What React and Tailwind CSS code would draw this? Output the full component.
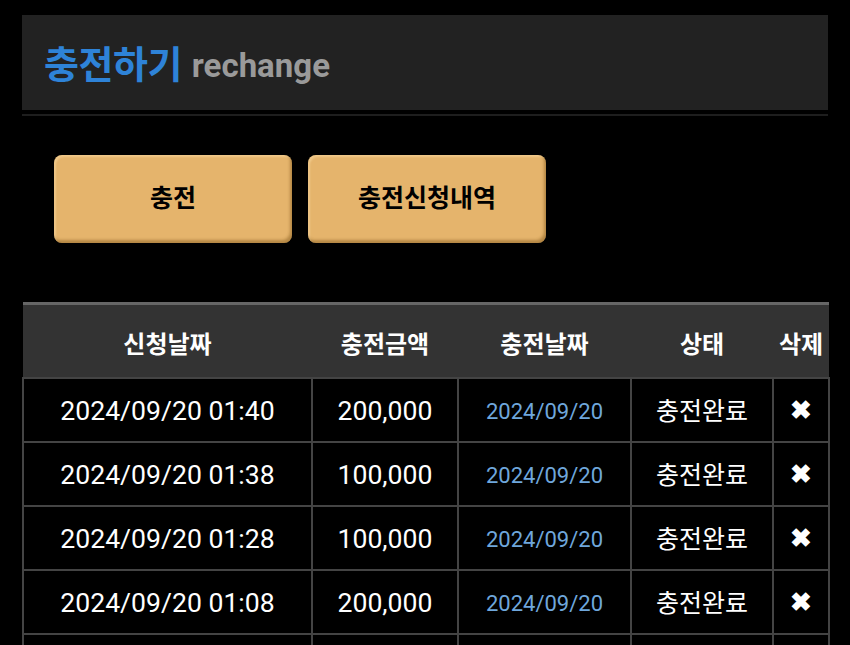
import React from "react";

const rows = [
  { req: "2024/09/20 01:40", amount: "200,000", date: "2024/09/20", status: "충전완료" },
  { req: "2024/09/20 01:38", amount: "100,000", date: "2024/09/20", status: "충전완료" },
  { req: "2024/09/20 01:28", amount: "100,000", date: "2024/09/20", status: "충전완료" },
  { req: "2024/09/20 01:08", amount: "200,000", date: "2024/09/20", status: "충전완료" },
  { req: "2024/09/20 00:52", amount: "100,000", date: "2024/09/20", status: "충전완료" },
];

export default function App() {
  return (
    <div
      className="bg-black px-[22px] pt-[15px] overflow-hidden h-[645px]"
      style={{ fontFamily: 'Roboto, "Noto Sans CJK KR", sans-serif' }}
    >
      {/* header */}
      <div className="h-[95px] bg-[#222222] flex items-center pl-[22px] pt-[6px]">
        <span className="text-[38px] font-bold text-[#2e83d8] tracking-[-0.5px]">충전하기</span>
        <span className="ml-[10px] text-[33px] font-bold text-[#9a9a9a]">rechange</span>
      </div>
      <div className="mt-[4px] h-[2px] bg-[#1e1e1e]" />

      {/* buttons */}
      <div className="flex gap-[16px] pl-[32px] mt-[39px]">
        <button className="w-[238px] h-[88px] rounded-[8px] bg-[#e5b46c] text-black font-bold text-[25px] shadow-[inset_-2px_-3px_3px_rgba(120,80,20,0.45),inset_2px_2px_2px_rgba(255,230,180,0.4)]">
          충전
        </button>
        <button className="w-[238px] h-[88px] rounded-[8px] bg-[#e5b46c] text-black font-bold text-[25px] shadow-[inset_-2px_-3px_3px_rgba(120,80,20,0.45),inset_2px_2px_2px_rgba(255,230,180,0.4)]">
          충전신청내역
        </button>
      </div>

      {/* table */}
      <table className="mt-[59px] w-[806px] border-collapse table-fixed border-t-[3px] border-[#666666]">
        <colgroup>
          <col className="w-[289px]" />
          <col className="w-[146px]" />
          <col className="w-[173px]" />
          <col className="w-[142px]" />
          <col className="w-[56px]" />
        </colgroup>
        <thead>
          <tr className="h-[74px] bg-[#333333] text-white text-[24px]">
            <th className="font-bold pt-[8px]">신청날짜</th>
            <th className="font-bold pt-[8px]">충전금액</th>
            <th className="font-bold pt-[8px]">충전날짜</th>
            <th className="font-bold pt-[8px]">상태</th>
            <th className="font-bold pt-[8px]">삭제</th>
          </tr>
        </thead>
        <tbody>
          {rows.map((r, i) => (
            <tr key={i} className="h-[64px] text-white text-center">
              <td className="border-2 border-[#444444] text-[26.6px] pt-[2px]">{r.req}</td>
              <td className="border-2 border-[#444444] text-[26.6px] pt-[2px]">{r.amount}</td>
              <td className="border-2 border-[#444444] text-[22px] text-[#6fa7dc] pt-[4px]">{r.date}</td>
              <td className="border-2 border-[#444444] text-[25px] pt-[4px]">{r.status}</td>
              <td className="border-2 border-[#444444] text-[26px] font-bold pt-[2px]">✖</td>
            </tr>
          ))}
        </tbody>
      </table>
    </div>
  );
}
